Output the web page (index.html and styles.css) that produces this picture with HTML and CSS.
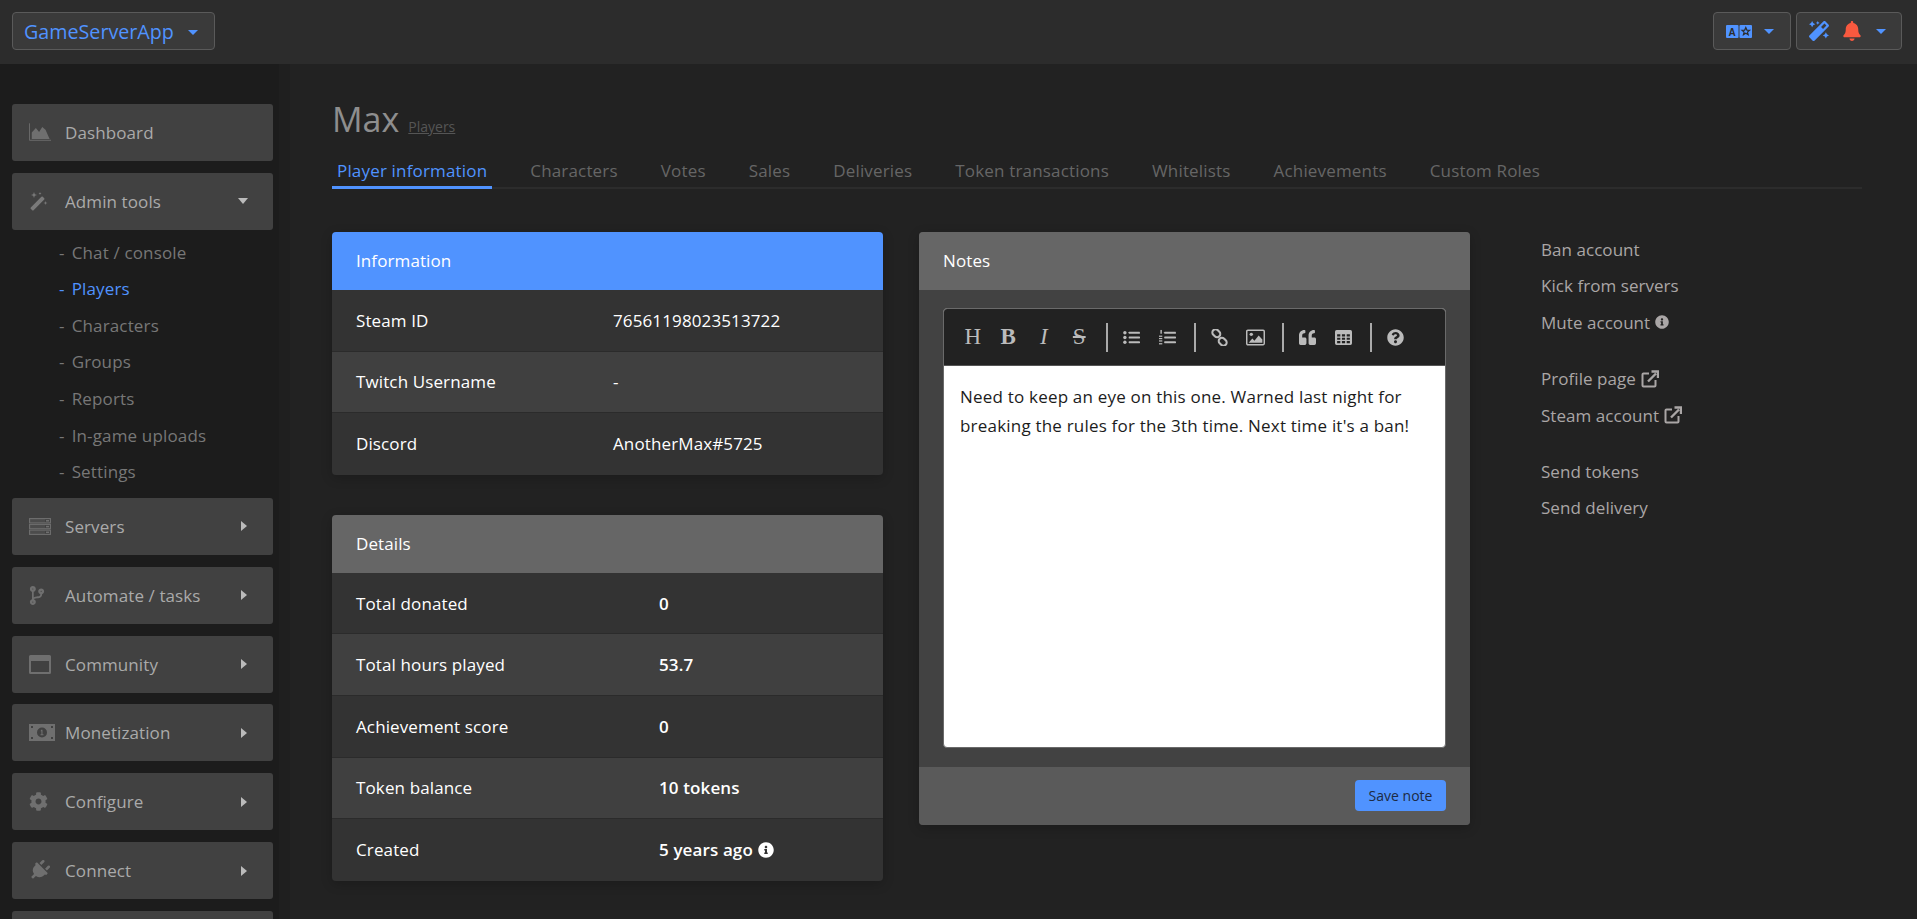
FILE: index.html
```html
<!DOCTYPE html>
<html lang="en">
<head>
<meta charset="utf-8">
<title>Max - Players</title>
<link rel="stylesheet" href="styles.css">
</head>
<body>
<svg class="sprite" xmlns="http://www.w3.org/2000/svg">
  <symbol id="i-info" viewBox="0 0 512 512"><path d="M256 8C119.043 8 8 119.083 8 256c0 136.997 111.043 248 248 248s248-111.003 248-248C504 119.083 392.957 8 256 8zm0 110c23.196 0 42 18.804 42 42s-18.804 42-42 42-42-18.804-42-42 18.804-42 42-42zm56 254c0 6.627-5.373 12-12 12h-88c-6.627 0-12-5.373-12-12v-24c0-6.627 5.373-12 12-12h12v-64h-12c-6.627 0-12-5.373-12-12v-24c0-6.627 5.373-12 12-12h64c6.627 0 12 5.373 12 12v100h12c6.627 0 12 5.373 12 12v24z"/></symbol>
  <symbol id="i-magic" viewBox="0 0 512 512"><path d="M224 96l16-32 32-16-32-16-16-32-16 32-32 16 32 16 16 32zM80 160l26.66-53.33L160 80l-53.34-26.67L80 0 53.34 53.33 0 80l53.34 26.67L80 160zm352 128l-26.66 53.33L352 368l53.34 26.67L432 448l26.66-53.33L512 368l-53.34-26.67L432 288zm70.62-193.77L417.77 9.38C411.53 3.12 403.34 0 395.15 0c-8.19 0-16.38 3.12-22.63 9.38L9.38 372.52c-12.5 12.5-12.5 32.76 0 45.25l84.85 84.85c6.25 6.25 14.44 9.37 22.62 9.37 8.19 0 16.38-3.12 22.63-9.37l363.14-363.15c12.5-12.48 12.5-32.75 0-45.24zM359.45 203.46l-50.91-50.91 86.6-86.6 50.91 50.91-86.6 86.6z"/></symbol>
  <symbol id="i-ext" viewBox="0 0 18 18"><path d="M8 3.500H2.500a1 1 0 0 0-1 1V15.500a1 1 0 0 0 1 1H13.500a1 1 0 0 0 1-1V10" fill="none" stroke="currentColor" stroke-width="2"/><path d="M7 11.500 15 3.500M10.500 1.500H17V8" fill="none" stroke="currentColor" stroke-width="2.400"/></symbol>
</svg>

<header class="topbar">
  <button class="top-btn brand">GameServerApp <span class="caret caret-blue caret-brand"></span></button>
  <div class="top-right">
    <button class="top-btn lang">
      <svg class="lang-icon" viewBox="0 0 26 13"><rect width="12.500" height="13" rx="1" fill="#5093ff"/><rect x="13.500" width="12.500" height="13" rx="1" fill="#5093ff"/><text x="6.200" y="10.500" class="lang-a">A</text><path d="M19.800 2.500l1.100 2.600 2.700.2-2.100 1.800.7 2.700-2.400-1.500-2.400 1.500.7-2.700-2.100-1.800 2.700-.2z" fill="none" stroke="#2c2c2c" stroke-width="1.200"/></svg>
      <span class="caret caret-blue"></span>
    </button>
    <button class="top-btn tools">
      <svg class="top-icon icon-blue"><use href="#i-magic"/></svg>
      <svg class="top-icon icon-red" viewBox="0 0 448 512"><path d="M224 512c35.32 0 63.970-28.650 63.970-64H160.030c0 35.350 28.650 64 63.970 64zm215.390-149.710c-19.320-20.760-55.470-51.990-55.470-154.290 0-77.700-54.480-139.900-127.940-155.160V32c0-17.670-14.320-32-31.980-32s-31.980 14.330-31.980 32v20.840C118.560 68.100 64.080 130.300 64.080 208c0 102.300-36.150 133.530-55.470 154.290-6 6.450-8.660 14.160-8.610 21.710.11 16.400 12.980 32 32.100 32h383.800c19.120 0 32-15.600 32.100-32 .05-7.550-2.610-15.270-8.610-21.710z"/></svg>
      <span class="caret caret-blue"></span>
    </button>
  </div>
</header>

<div class="layout">
  <nav class="sidebar">
    <a class="nav-item">
      <svg class="nav-icon" viewBox="0 0 24 20"><path d="M.5 0v18.500H24" fill="none" stroke="currentColor" stroke-width="1"/><path d="M3 17V10L7.500 5l3.500 4.500L14.500 4 18 7l4.500 10z"/></svg>
      <span class="nav-label">Dashboard</span>
    </a>
    <a class="nav-item nav-item-open">
      <svg class="nav-icon nav-icon-magic" viewBox="0 0 19 19"><rect x="6.500" y="3" width="4" height="17" rx="1" transform="rotate(45 8.500 11.500)"/><path d="M5 0l.8 2.200L8 3 5.800 3.800 5 6l-.8-2.200L2 3l2.200-.8zM16.500 9l.5 1.500 1.500.5-1.500.5-.5 1.500-.5-1.500-1.500-.5 1.500-.5zM11 0l.4 1.100 1.100.4-1.100.4-.4 1.100-.4-1.100-1.100-.4 1.100-.4z"/></svg>
      <span class="nav-label">Admin tools</span>
      <span class="caret caret-nav"></span>
    </a>
    <ul class="subnav">
      <li>Chat / console</li>
      <li class="active">Players</li>
      <li>Characters</li>
      <li>Groups</li>
      <li>Reports</li>
      <li>In-game uploads</li>
      <li>Settings</li>
    </ul>
    <a class="nav-item">
      <svg class="nav-icon" viewBox="0 0 22 17"><g fill="none" stroke="currentColor" stroke-width="1.100"><rect x=".6" y=".6" width="20.800" height="4.300"/><rect x=".6" y="6.400" width="20.800" height="4.300"/><rect x=".6" y="12.100" width="20.800" height="4.300"/></g><rect x="17" y="2" width="3" height="1.600"/><rect x="17" y="7.800" width="3" height="1.600"/><rect x="17" y="13.500" width="3" height="1.600"/><rect x="1" y="1" width="15" height="3.500" opacity=".25"/><rect x="1" y="6.800" width="15" height="3.500" opacity=".25"/><rect x="1" y="12.500" width="15" height="3.500" opacity=".25"/></svg>
      <span class="nav-label">Servers</span>
      <span class="caret-right"></span>
    </a>
    <a class="nav-item">
      <svg class="nav-icon nav-icon-branch" viewBox="0 0 384 512"><path d="M384 144c0-44.200-35.800-80-80-80s-80 35.800-80 80c0 36.400 24.300 67.100 57.500 76.800-.6 16.100-4.200 28.500-11 36.900-15.400 19.200-49.300 22.400-85.200 25.700-28.200 2.600-57.400 5.400-81.300 16.900v-144c32.500-10.200 56-40.500 56-76.300 0-44.200-35.800-80-80-80S0 35.800 0 80c0 35.800 23.500 66.100 56 76.300v199.300C23.500 365.900 0 396.200 0 432c0 44.200 35.800 80 80 80s80-35.800 80-80c0-34-21.200-63.100-51.200-74.600 3.100-5.200 7.800-9.800 14.900-13.400 16.200-8.200 40.400-10.400 66.100-12.800 42.200-3.900 90-8.400 118.200-43.400 14-17.400 21.100-39.800 21.600-67.900 31.600-10.800 54.400-40.700 54.400-75.900zM80 64c8.800 0 16 7.200 16 16s-7.200 16-16 16-16-7.200-16-16 7.200-16 16-16zm0 384c-8.800 0-16-7.200-16-16s7.200-16 16-16 16 7.200 16 16-7.200 16-16 16zm224-320c8.800 0 16 7.200 16 16s-7.200 16-16 16-16-7.200-16-16 7.200-16 16-16z"/></svg>
      <span class="nav-label">Automate / tasks</span>
      <span class="caret-right"></span>
    </a>
    <a class="nav-item">
      <svg class="nav-icon" viewBox="0 0 22 19"><path fill-rule="evenodd" d="M1.500 0h19A1.500 1.500 0 0 1 22 1.500v16a1.500 1.500 0 0 1-1.500 1.500h-19A1.500 1.500 0 0 1 0 17.500v-16A1.500 1.500 0 0 1 1.500 0zM2 6v11h18V6z"/></svg>
      <span class="nav-label">Community</span>
      <span class="caret-right"></span>
    </a>
    <a class="nav-item">
      <svg class="nav-icon nav-icon-money" viewBox="0 0 26 17"><path fill-rule="evenodd" d="M0 0h26v17H0zM13 3.500a5 5 0 1 0 0 10 5 5 0 0 0 0-10zM12.200 5.800h1.300v4.400h1v1h-3v-1h.9V7.200h-.9z"/><g fill="#414141"><rect x="2" y="2" width="2" height="2"/><rect x="22" y="2" width="2" height="2"/><rect x="2" y="13" width="2" height="2"/><rect x="22" y="13" width="2" height="2"/></g></svg>
      <span class="nav-label">Monetization</span>
      <span class="caret-right"></span>
    </a>
    <a class="nav-item">
      <svg class="nav-icon nav-icon-cog" viewBox="0 0 512 512"><path d="M487.400 315.700l-42.600-24.600c4.300-23.200 4.300-47 0-70.200l42.600-24.600c4.900-2.800 7.100-8.600 5.500-14-11.100-35.600-30-67.800-54.700-94.600-3.800-4.100-10-5.100-14.800-2.300L380.800 110c-17.900-15.400-38.500-27.300-60.800-35.100V25.800c0-5.600-3.900-10.500-9.400-11.700-36.700-8.200-74.300-7.800-109.200 0-5.500 1.200-9.400 6.100-9.400 11.700V75c-22.200 7.900-42.800 19.800-60.800 35.100L88.700 85.500c-4.900-2.800-11-1.900-14.800 2.300-24.700 26.700-43.600 58.900-54.700 94.600-1.700 5.400.6 11.200 5.500 14L67.300 221c-4.300 23.200-4.300 47 0 70.200l-42.600 24.600c-4.900 2.800-7.100 8.600-5.500 14 11.100 35.600 30 67.800 54.700 94.600 3.800 4.100 10 5.100 14.800 2.300l42.600-24.600c17.900 15.400 38.500 27.300 60.800 35.100v49.200c0 5.600 3.900 10.500 9.400 11.700 36.700 8.200 74.300 7.800 109.200 0 5.500-1.200 9.400-6.100 9.400-11.700v-49.200c22.200-7.900 42.800-19.800 60.800-35.100l42.600 24.600c4.900 2.800 11 1.900 14.800-2.300 24.700-26.700 43.600-58.900 54.700-94.600 1.500-5.500-.7-11.300-5.600-14.100zM256 336c-44.100 0-80-35.900-80-80s35.900-80 80-80 80 35.900 80 80-35.900 80-80 80z"/></svg>
      <span class="nav-label">Configure</span>
      <span class="caret-right"></span>
    </a>
    <a class="nav-item">
      <svg class="nav-icon nav-icon-plug" viewBox="0 0 512 512"><g transform="rotate(45 256 256) translate(64 0)"><path d="M320 32a32 32 0 0 0-64 0v96h64zm48 128H16a16 16 0 0 0-16 16v32a16 16 0 0 0 16 16h16v32a160.070 160.070 0 0 0 128 156.800V512h64v-99.200A160.070 160.070 0 0 0 352 256v-32h16a16 16 0 0 0 16-16v-32a16 16 0 0 0-16-16zM128 32a32 32 0 0 0-64 0v96h64z"/></g></svg>
      <span class="nav-label">Connect</span>
      <span class="caret-right"></span>
    </a>
    <a class="nav-item"></a>
  </nav>

  <main class="main">
    <div class="page-head">
      <h1 class="page-title">Max</h1>
      <a class="crumb">Players</a>
    </div>
    <div class="tabs">
      <a class="tab tab-active">Player information</a>
      <a class="tab">Characters</a>
      <a class="tab">Votes</a>
      <a class="tab">Sales</a>
      <a class="tab">Deliveries</a>
      <a class="tab">Token transactions</a>
      <a class="tab">Whitelists</a>
      <a class="tab">Achievements</a>
      <a class="tab">Custom Roles</a>
    </div>

    <div class="content">
      <div class="col">
        <section class="panel">
          <h2 class="panel-head panel-head-blue">Information</h2>
          <div class="row row-info"><span>Steam ID</span><span>76561198023513722</span></div>
          <div class="row row-info"><span>Twitch Username</span><span>-</span></div>
          <div class="row row-info"><span>Discord</span><span>AnotherMax#5725</span></div>
        </section>
        <section class="panel panel-details">
          <h2 class="panel-head">Details</h2>
          <div class="row row-detail"><span>Total donated</span><b>0</b></div>
          <div class="row row-detail"><span>Total hours played</span><b>53.7</b></div>
          <div class="row row-detail"><span>Achievement score</span><b>0</b></div>
          <div class="row row-detail"><span>Token balance</span><b>10 tokens</b></div>
          <div class="row row-detail"><span>Created</span><b>5 years ago <svg class="info-icon"><use href="#i-info"/></svg></b></div>
        </section>
      </div>

      <section class="panel panel-notes">
        <h2 class="panel-head">Notes</h2>
        <div class="notes-body">
          <div class="editor">
            <div class="toolbar">
              <span class="tool tool-text tool-h">H</span>
              <span class="tool tool-text tool-b">B</span>
              <span class="tool tool-text tool-i">I</span>
              <span class="tool tool-text tool-s">S</span>
              <span class="tool-sep"></span>
              <span class="tool"><svg class="tool-icon" viewBox="0 0 18 14"><circle cx="2" cy="2" r="1.800"/><circle cx="2" cy="7" r="1.800"/><circle cx="2" cy="12" r="1.800"/><rect x="6" y="1" width="12" height="2" rx=".5"/><rect x="6" y="6" width="12" height="2" rx=".5"/><rect x="6" y="11" width="12" height="2" rx=".5"/></svg></span>
              <span class="tool"><svg class="tool-icon" viewBox="0 0 18 16"><rect x="5.500" y="2" width="12.500" height="2" rx=".5"/><rect x="5.500" y="7" width="12.500" height="2" rx=".5"/><rect x="5.500" y="12" width="12.500" height="2" rx=".5"/><rect x="1.500" y="0" width="1.500" height="4"/><rect x="0" y="6" width="3.500" height="1.300"/><rect x="0" y="8.500" width="3.500" height="1.300"/><rect x="0" y="11" width="3.500" height="1.300"/><rect x="0" y="14" width="3.500" height="1.300"/></svg></span>
              <span class="tool-sep"></span>
              <span class="tool"><svg class="tool-icon" viewBox="0 0 16 16"><g fill="none" stroke="currentColor" stroke-width="2"><rect x="1" y="1" width="8" height="6" rx="3" transform="rotate(45 5 4)"/><rect x="7" y="9" width="8" height="6" rx="3" transform="rotate(45 11 12)"/></g></svg></span>
              <span class="tool"><svg class="tool-icon tool-icon-wide" viewBox="0 0 18 15"><rect x=".7" y=".7" width="16.600" height="13.600" rx="1" fill="none" stroke="currentColor" stroke-width="1.400"/><circle cx="5" cy="4.500" r="1.600"/><path d="M2.500 12.500 6 8.500l2 2 4-5 3.500 4v3z"/></svg></span>
              <span class="tool-sep"></span>
              <span class="tool"><svg class="tool-icon" viewBox="0 0 512 512"><path d="M464 256h-80v-64c0-35.300 28.700-64 64-64h8c13.300 0 24-10.700 24-24V56c0-13.300-10.700-24-24-24h-8c-88.400 0-160 71.600-160 160v240c0 26.500 21.500 48 48 48h128c26.500 0 48-21.500 48-48V304c0-26.500-21.500-48-48-48zm-288 0H96v-64c0-35.300 28.700-64 64-64h8c13.300 0 24-10.700 24-24V56c0-13.300-10.700-24-24-24h-8C71.600 32 0 103.600 0 192v240c0 26.500 21.500 48 48 48h128c26.500 0 48-21.500 48-48V304c0-26.500-21.500-48-48-48z"/></svg></span>
              <span class="tool"><svg class="tool-icon" viewBox="0 0 16 14"><path fill-rule="evenodd" d="M1.500 0h13A1.500 1.500 0 0 1 16 1.500v11a1.500 1.500 0 0 1-1.500 1.500h-13A1.500 1.500 0 0 1 0 12.500v-11A1.500 1.500 0 0 1 1.500 0zM2 4v2h3V4zm4.500 0v2h3V4zM11 4v2h3V4zM2 7.200v2h3v-2zm4.500 0v2h3v-2zm4.500 0v2h3v-2zM2 10.400v2h3v-2zm4.500 0v2h3v-2zm4.500 0v2h3v-2z"/></svg></span>
              <span class="tool-sep"></span>
              <span class="tool"><svg class="tool-icon" viewBox="0 0 512 512"><path d="M504 256c0 136.997-111.043 248-248 248S8 392.997 8 256C8 119.083 119.043 8 256 8s248 111.083 248 248zM262.655 90c-54.497 0-89.255 22.957-116.549 63.758-3.536 5.286-2.353 12.415 2.715 16.258l34.699 26.310c5.205 3.947 12.621 3.008 16.665-2.122 17.864-22.658 30.113-35.797 57.303-35.797 20.429 0 45.698 13.148 45.698 32.958 0 14.976-12.363 22.667-32.534 33.976C247.128 238.528 216 254.941 216 296v4c0 6.627 5.373 12 12 12h56c6.627 0 12-5.373 12-12v-1.333c0-28.462 83.186-29.647 83.186-106.667 0-58.002-60.165-102-116.531-102zM256 338c-25.365 0-46 20.635-46 46 0 25.364 20.635 46 46 46s46-20.636 46-46c0-25.365-20.635-46-46-46z"/></svg></span>
            </div>
            <div class="editor-text">Need to keep an eye on this one. Warned last night for breaking the rules for the 3th time. Next time it's a ban!</div>
          </div>
        </div>
        <footer class="notes-foot"><button class="save-btn">Save note</button></footer>
      </section>

      <aside class="actions">
        <div class="action-group">
          <a class="action">Ban account</a>
          <a class="action">Kick from servers</a>
          <a class="action">Mute account <svg class="action-info"><use href="#i-info"/></svg></a>
        </div>
        <div class="action-group">
          <a class="action">Profile page <svg class="action-ext"><use href="#i-ext"/></svg></a>
          <a class="action">Steam account <svg class="action-ext"><use href="#i-ext"/></svg></a>
        </div>
        <div class="action-group">
          <a class="action">Send tokens</a>
          <a class="action">Send delivery</a>
        </div>
      </aside>
    </div>
  </main>
</div>
</body>
</html>
```

FILE: styles.css
```css
* { box-sizing: border-box; }

html, body {
  margin: 0;
  height: 919px;
  overflow: hidden;
}

body {
  background: #222;
  color: #fff;
  font-family: "Open Sans", "Liberation Sans", sans-serif;
  font-size: 16px;
}

.sprite { display: none; }

/* top bar */
.topbar {
  height: 64px;
  padding: 12px 15px 14px 12px;
  display: flex;
  justify-content: space-between;
  background: #2c2c2c;
  position: relative;
  z-index: 2;
}

.top-right { display: flex; gap: 5px; }

.top-btn {
  height: 38px;
  display: flex;
  align-items: center;
  background: #3a3a3a;
  border: 1px solid #5a5a5a;
  border-radius: 4px;
  font-family: inherit;
  padding: 0;
}

.brand {
  width: 203px;
  padding-left: 11px;
  color: #5093ff;
  font-size: 19.700px;
}

.lang { width: 78px; padding-left: 12px; }
.tools { width: 106px; padding-left: 12px; }

.lang-icon { width: 26px; height: 13px; margin-right: 12px; }
.lang-a { font: 700 10px "Liberation Sans", sans-serif; text-anchor: middle; fill: #2c2c2c; }

.top-icon { width: 20px; height: 20px; fill: currentColor; }
.icon-blue { color: #5093ff; margin-right: 14px; }
.icon-red { color: #f8593f; width: 18px; margin-right: 15px; }

.caret {
  display: inline-block;
  width: 0;
  height: 0;
  border-left: 5px solid transparent;
  border-right: 5px solid transparent;
  border-top: 5px solid #aaa;
}

.caret-blue { border-top-color: #5093ff; }
.caret-brand { margin-left: 14px; margin-top: 2px; }

.caret-right {
  width: 0;
  height: 0;
  margin-left: auto;
  margin-right: 26px;
  border-top: 5px solid transparent;
  border-bottom: 5px solid transparent;
  border-left: 6px solid #bbb;
}

/* sidebar */
.layout { display: flex; height: 855px; }

.sidebar {
  width: 279px;
  flex: none;
  padding: 40px 6px 0 12px;
  background: #1c1c1c;
  box-shadow: 11px 0 0 #1f1f1f;
  overflow: hidden;
}

.nav-item {
  height: 57px;
  margin-bottom: 11.900px;
  display: flex;
  align-items: center;
  padding-left: 17px;
  background: #414141;
  border-radius: 3px;
  color: #aaa;
  font-size: 17px;
  letter-spacing: .1px;
}

.nav-item-open { margin-bottom: 4.700px; }

.nav-icon {
  width: 22px;
  height: 19px;
  flex: none;
  fill: currentColor;
  color: #6f6f6f;
}

.nav-icon-magic { width: 19px; color: #7a7a7a; }
.nav-icon-branch { width: 16px; }
.nav-icon-money { width: 26px; }
.nav-icon-cog { width: 19px; }
.nav-icon-plug { width: 21px; height: 21px; }

.nav-label { flex: 1; padding-left: 14px; }

.nav-icon-magic + .nav-label { padding-left: 17px; }
.nav-icon-branch + .nav-label { padding-left: 20px; }
.nav-icon-money + .nav-label { padding-left: 10px; }
.nav-icon-cog + .nav-label { padding-left: 17px; }
.nav-icon-plug + .nav-label { padding-left: 15px; }

.caret-nav { margin-right: 25px; border-top-color: #bbb; border-top-width: 6px; }

.subnav {
  list-style: none;
  margin: 0 0 7px;
  padding: 0 0 0 47px;
  color: #777;
  font-size: 17px;
  letter-spacing: .15px;
}

.subnav li { height: 36.600px; line-height: 36.600px; }
.subnav li::before { content: "-"; margin-right: 7px; }
.subnav .active { color: #5093ff; }

/* main */
.main { flex: 1; min-width: 0; padding: 31px 55px 0 53px; }

.page-head { height: 48px; display: flex; align-items: baseline; }

.page-title {
  margin: 0;
  font-size: 34px;
  font-weight: 400;
  line-height: 48px;
  color: #8e8e8e;
}

.crumb {
  margin-left: 9px;
  font-size: 14px;
  color: #555;
  text-decoration: underline;
}

.tabs {
  display: flex;
  height: 46px;
  padding-top: 7px;
  border-bottom: 2px solid #2c2c2c;
}

.tab {
  height: 39px;
  padding: 0 5px;
  margin-right: 33px;
  line-height: 41px;
  font-size: 17px;
  letter-spacing: .17px;
  color: #666;
}

.tab-active { color: #5093ff; border-bottom: 3px solid #5093ff; }

.content {
  margin-top: 43px;
  display: grid;
  grid-template-columns: 551px 551px 1fr;
  column-gap: 36px;
  align-items: start;
}

/* panels */
.panel {
  border-radius: 4px;
  overflow: hidden;
  box-shadow: 0 3px 12px rgba(0, 0, 0, .2);
}

.panel-details { margin-top: 40px; }

.panel-head {
  margin: 0;
  height: 58px;
  padding-left: 24px;
  font-size: 17px;
  font-weight: 400;
  line-height: 57px;
  color: #fff;
  background: #666;
  letter-spacing: .1px;
}

.panel-head-blue { background: #5093ff; }

.row {
  display: grid;
  height: 61.600px;
  align-items: center;
  padding-left: 24px;
  font-size: 17px;
  letter-spacing: .12px;
  background: #333;
  border-bottom: 1px solid #2b2b2b;
}

.row:nth-of-type(even) { background: #404040; }
.row:last-child { border-bottom: 0; }

.row-info { grid-template-columns: 257px 1fr; }
.row-detail { grid-template-columns: 303px 1fr; }
.row-detail b { font-weight: 600; display: flex; align-items: center; gap: 5px; }

.info-icon { width: 16px; height: 16px; fill: #fff; }

/* notes */
.panel-notes { background: #424242; }

.notes-body { padding: 18px 24px 19px; }

.editor {
  height: 440px;
  border-radius: 4px;
  overflow: hidden;
  background: #fff;
  border: 1px solid #6a6a6a;
}

.toolbar {
  height: 57px;
  display: flex;
  align-items: center;
  padding-left: 11px;
  background: #222;
  border-bottom: 1px solid #555;
  color: #bbb;
}

.tool {
  width: 35.500px;
  flex: none;
  display: flex;
  justify-content: center;
  align-items: center;
}

.tool-text { font-family: "Liberation Serif", serif; font-size: 23px; }
.tool-b { font-weight: 700; }
.tool-i { font-style: italic; }
.tool-s { text-decoration: line-through; }

.tool-sep {
  width: 2.500px;
  height: 29px;
  flex: none;
  margin: 0 6px 0 8.500px;
  background: #aaa;
}

.tool-icon { width: 17px; height: 17px; fill: currentColor; }
.tool-icon-wide { width: 19px; }

.editor-text {
  padding: 16px 16px;
  font-size: 17px;
  line-height: 29px;
  letter-spacing: .2px;
  color: #1c1c1c;
}

.notes-foot {
  height: 58px;
  padding: 13px 24px 0;
  display: flex;
  justify-content: flex-end;
  background: #5a5a5a;
}

.save-btn {
  width: 91px;
  height: 31px;
  padding: 0;
  background: #5093ff;
  border: 0;
  border-radius: 4px;
  font-family: inherit;
  font-size: 14px;
  color: #1c2a44;
}

/* right actions */
.actions { margin-left: 35px; margin-top: -1px; color: #aaa6a6; font-size: 17px; letter-spacing: .05px; }

.action-group { margin-bottom: 19.500px; }

.action {
  height: 36.600px;
  display: flex;
  align-items: center;
  gap: 5px;
}

.action-info { width: 14px; height: 14px; fill: currentColor; }
.action-ext { width: 18px; height: 18px; fill: currentColor; }
```
